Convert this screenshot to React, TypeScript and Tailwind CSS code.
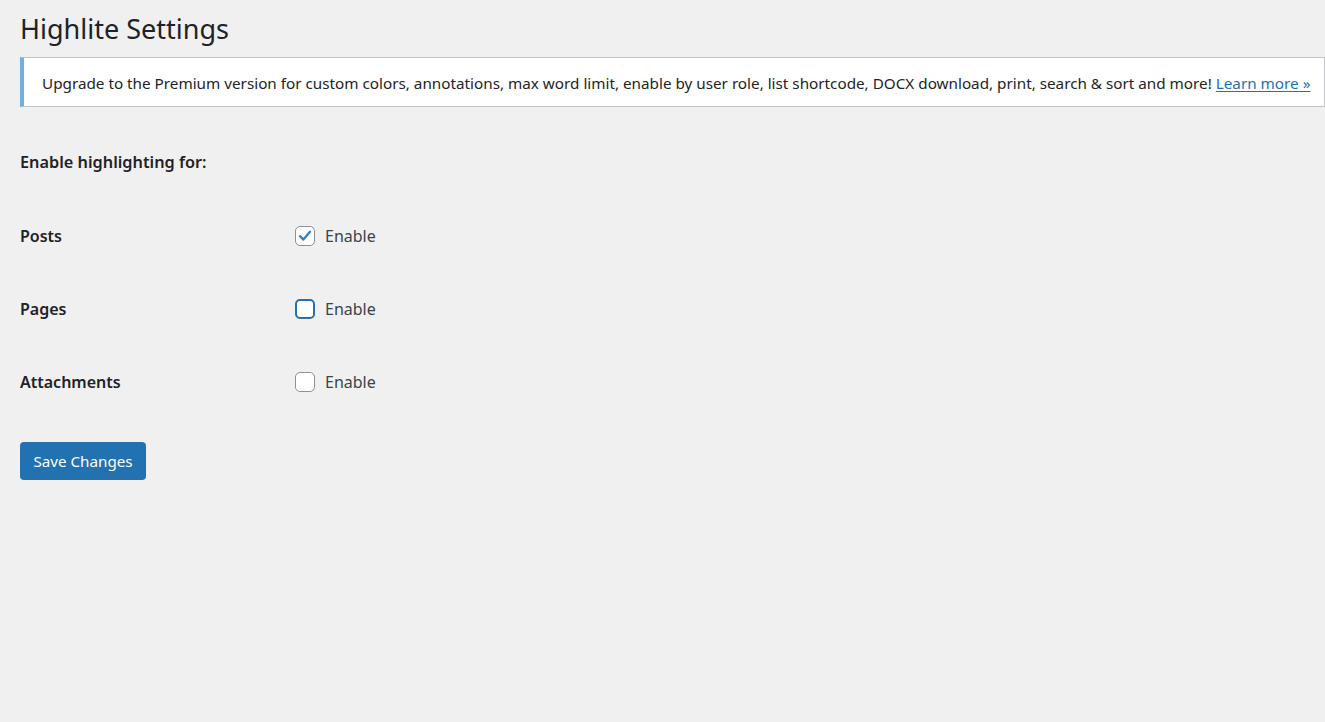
import * as React from "react";

const font = { fontFamily: '"Noto Sans", "Open Sans", sans-serif' };

type Row = { label: string; checked: boolean; focused?: boolean };

const rows: Row[] = [
  { label: "Posts", checked: true },
  { label: "Pages", checked: false, focused: true },
  { label: "Attachments", checked: false },
];

function Checkbox({ checked, focused }: { checked: boolean; focused?: boolean }) {
  return (
    <span
      className={
        focused
          ? "flex h-[20px] w-[20px] items-center justify-center rounded-[5px] border-2 border-[#2271b1] bg-white"
          : "flex h-[20px] w-[20px] items-center justify-center rounded-[5px] border border-[#8c8f94] bg-white"
      }
    >
      {checked && (
        <svg viewBox="0 0 20 20" className="h-[18px] w-[18px]">
          <path
            d="M4.5 10.2 L8.2 14 L15.6 5.4"
            fill="none"
            stroke="#3582c4"
            strokeWidth="2.6"
            strokeLinecap="round"
            strokeLinejoin="round"
          />
        </svg>
      )}
    </span>
  );
}

export default function App() {
  return (
    <div className="min-h-[722px] w-full overflow-hidden bg-[#f0f0f1] pl-[20px] text-[#1d2327]" style={font}>
      <h1 className="pt-[10px] text-[27px] font-normal leading-[37px]">Highlite Settings</h1>

      <div className="mt-[10px] flex h-[50px] items-center whitespace-nowrap border border-l-4 border-[#c3c4c7] border-l-[#72aee6] bg-white pl-[18px] pt-[2px] text-[15.25px]">
        <p className="text-[#1d2327]">
          Upgrade to the Premium version for custom colors, annotations, max word limit, enable by user role, list
          shortcode, DOCX download, print, search &amp; sort and more!{" "}
          <a href="#" className="text-[#2271b1] underline underline-offset-2">
            Learn more »
          </a>
        </p>
      </div>

      <h2 className="mt-[43px] text-[16.3px] font-semibold leading-[24px]">Enable highlighting for:</h2>

      <div className="mt-[25px] flex flex-col">
        {rows.map((r) => (
          <div key={r.label} className="flex h-[73px] items-center">
            <div className="w-[275px] text-[16px] font-semibold">{r.label}</div>
            <label className="flex items-center gap-[10px] text-[16px] text-[#3c434a]">
              <Checkbox checked={r.checked} focused={r.focused} />
              Enable
            </label>
          </div>
        ))}
      </div>

      <button className="mt-[24px] h-[38px] w-[126px] rounded-[4px] bg-[#2271b1] text-[15.2px] text-white">
        Save Changes
      </button>
    </div>
  );
}
